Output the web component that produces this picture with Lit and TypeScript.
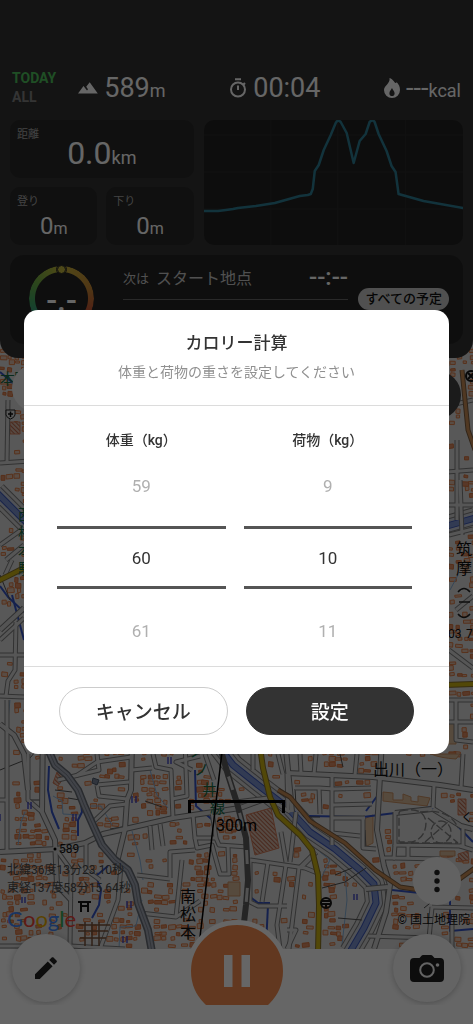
import { LitElement, html, css, svg } from "lit";
import { customElement, state, property } from "lit/decorators.js";

type Pt = [number, number];

const parse = (s: string): Pt[] =>
  s.split(" ").map((p) => p.split(",").map(Number) as Pt);

/* Street network of the map */
const MINOR = [
  "7,700 7,850", "0,800 8,800", "97,754 99,770 58,780", "97,785 129,782", "76,776 97,762 131,757",
  "97,785 99,796 127,799", "92,823 110,806 127,804", "153,754 156,767 171,770 173,818", "185,740 187,796 172,799",
  "132,770 152,768", "193,815 195,838 216,838 219,845 248,847", "195,838 197,848 212,845 220,874 229,874 228,846",
  "212,812 216,838", "170,878 170,852 195,850",
  "137,875 170,879", "140,913 176,917 200,901", "176,917 182,860", "0,946 70,946 125,949", "70,946 71,870 56,849",
  "86,843 86,870 100,880", "100,949 118,900 121,866", "150,826 152,850", "160,824 163,846", "28,754 28,800 42,812",
  "319,787 320,814", "295,788 319,788 334,789 371,788", "333,805 372,804", "333,818 365,818", "332,773 332,845",
  "287,774 288,812", "300,754 301,773", "316,754 314,774", "357,754 355,775", "332,833 360,836", "363,818 363,848 376,849",
  "250,860 305,868 320,874", "250,860 250,902 258,906 287,906", "268,862 262,902", "286,865 277,925 280,949", "299,868 289,949",
  "287,930 296,930 287,949", "281,832 286,862", "296,812 290,862", "253,770 253,754", "278,754 283,774", "236,802 268,798 290,812",
  "395,812 395,845 463,846 463,828", "395,845 394,858 440,859", "382,858 395,858", "408,846 408,858",
  "432,907 473,908", "432,907 428,949", "452,925 452,949", "368,936 430,938", "463,754 461,788",
  "434,786 433,808", "460,846 473,850", "192,770 176,762 200,756", "205,754 214,780",
  "8,400 7,462", "0,463 30,461", "0,545 24,528", "6,560 24,545", "16,622 15,670 8,681 6,696", "0,696 24,697", "0,640 24,618",
  "0,655 24,655", "12,560 5,575", "447,406 473,400", "447,472 473,470", "449,535 473,529", "449,505 473,505", "457,440 457,520",
  "447,700 473,700", "456,700 456,740 473,742", "449,650 473,668", "456,610 473,596", "447,722 473,722", "460,480 462,535",
];
const STREETS = [
  "43,720 42,812 55,840 57,885 71,900", "0,852 57,849 85,843 103,834 125,829 173,818 240,808 262,800",
  "132,740 131,790 127,800 125,829 117,862", "285,740 290,790 292,812", "287,773 373,777 440,785 473,790",
  "382,740 377,830 384,866 390,885 386,912 374,949", "433,809 461,826 473,829", "395,813 432,809",
  "0,630 24,608", "0,724 14,735 24,754 28,790", "300,868 316,852", "366,889 388,887",
];
const MAIN = ["44,740 55,765 67,775 78,790 84,805 92,823 102,845 115,860 128,870 135,885 138,903 148,930 152,952"];
const RAIL = ["218,740 228,775 237,803 246,838 248,880 246,905 241,949"];
const RIVER = [
  "206,730 233,765 258,785 288,808 310,832 335,849 360,870 374,884 376,903 364,928 350,952",
  "-4,492 26,522", "447,526 475,518",
];
const YELLOW = ["259,740 263,768 270,797 278,815 300,835 312,850 318,875 319,905 318,952", "-4,582 28,566", "445,685 475,684"];
const ORANGE = ["278,790 290,797 310,821 345,843 375,870 400,887 440,893 475,868", "462,370 468,430 475,450"];
const BLUE = [
  "49,766 48,790 52,812 59,829", "80,793 82,812 78,820 78,836", "195,770 196,806 215,822", "0,586 8,597 24,612",
  "309,816 363,817 395,813 432,807 452,820 473,842", "366,811 378,795 380,754", "268,905 266,946", "248,840 249,896 258,903 270,903",
  "108,866 96,876 101,890 99,905 92,918", "0,372 14,384 22,396", "12,595 24,640", "450,900 450,931 473,929", "392,890 420,893 446,900",
];
const CREEK = [
  "53,796 62,801 63,814 80,815", "90,806 101,806 112,825", "18,845 21,822 25,812", "132,831 140,860 143,880", "150,770 157,795 168,808",
  "119,949 120,927 136,926 142,900", "345,870 347,900 342,945", "320,852 330,860 320,880", "8,720 10,700", "450,590 458,575",
];
const DARK = [
  "0,770 30,758 45,740", "55,790 72,792", "68,798 80,800", "40,800 28,800", "145,801 162,807", "110,829 122,827",
  "295,789 296,805 304,817 320,817", "340,754 343,767", "365,830 366,849", "338,918 362,920", "322,888 345,882 366,868",
  "0,575 10,600", "424,908 434,900", "335,875 352,868",
];

const seg = (p: Pt, a: Pt, b: Pt) => {
  const dx = b[0] - a[0], dy = b[1] - a[1];
  const t = Math.max(0, Math.min(1, ((p[0] - a[0]) * dx + (p[1] - a[1]) * dy) / (dx * dx + dy * dy || 1)));
  return Math.hypot(p[0] - a[0] - t * dx, p[1] - a[1] - t * dy);
};

/* House footprints, kept clear of streets and water */
function houses(): { outline: string; filled: string } {
  let s = 20417;
  const rnd = () => ((s = (s * 1103515245 + 12345) & 0x7fffffff) / 0x7fffffff);
  const clear: [Pt[], number][] = [
    ...[...MINOR, ...STREETS].map((l) => [parse(l), 5] as [Pt[], number]),
    ...[...MAIN, ...YELLOW, ...ORANGE, ...RAIL].map((l) => [parse(l), 7] as [Pt[], number]),
    ...RIVER.map((l) => [parse(l), 13] as [Pt[], number]),
    ...BLUE.map((l) => [parse(l), 4] as [Pt[], number]),
  ];
  let outline = "", filled = "";
  for (let y = 350; y < 948; y += 6)
    for (let x = 2; x < 473; x += 7) {
      const cx = x + rnd() * 3, cy = y + rnd() * 2;
      const w = 3 + rnd() * 4, h = 2 + rnd() * 3;
      const keep = rnd(), kind = rnd(), tilt = (rnd() - 0.5) * 1.4;
      const density = 0.6 + 0.3 * Math.sin(cx / 31) * Math.cos(cy / 27);
      if (keep > density) continue;
      if (cx > 393 && cx < 466 && cy > 806 && cy < 848) continue;
      if (cx > 382 && cx < 431 && cy > 786 && cy < 808) continue;
      if (cx > 242 && cx < 284 && cy > 804 && cy < 858) continue;
      if (cx > 374 && cx < 473 && cy > 754 && cy < 784) continue;
      if (cx > 335 && cx < 366 && cy > 885 && cy < 925) continue;
      if (clear.some(([l, d]) => l.some((p, i) => i > 0 && seg([cx, cy], l[i - 1], p) < d))) continue;
      const d = `M${(cx - w / 2).toFixed(1)} ${(cy - h / 2).toFixed(1)}l${w.toFixed(1)} ${(-tilt).toFixed(1)}l${(tilt / 2).toFixed(1)} ${h.toFixed(1)}l${(-w).toFixed(1)} ${tilt.toFixed(1)}z`;
      if (kind > 0.7) filled += d;
      else outline += d;
    }
  return { outline, filled };
}
const HOUSES = houses();

const lines = (list: string[], cls: string) =>
  list.map((points) => svg`<polyline class=${cls} points=${points}></polyline>`);

@customElement("street-map")
class StreetMap extends LitElement {
  static styles = css`
    :host { display: block; overflow: hidden; }
    svg { display: block; width: 100%; height: 100%; }
    polyline { fill: none; stroke-linejoin: round; }
    .minor-edge { stroke: #7c7c7c; stroke-width: 5px; }
    .minor { stroke: #d8d8d8; stroke-width: 3px; }
    .street-edge { stroke: #747474; stroke-width: 6px; }
    .street { stroke: #d2d2d2; stroke-width: 4px; }
    .main-edge { stroke: #666b74; stroke-width: 8px; }
    .main { stroke: #a2a8b4; stroke-width: 5px; }
    .main-mid { stroke: #7b808c; stroke-width: 1px; }
    .bank { stroke: #7c7c7c; stroke-width: 22px; }
    .levee { stroke: #d2d2d2; stroke-width: 20px; }
    .path { stroke: #7c7c7c; stroke-width: 14px; }
    .shore { stroke: #c8ccd8; stroke-width: 12px; }
    .stream-edge { stroke: #3c58b8; stroke-width: 7px; }
    .stream { stroke: #7e93d0; stroke-width: 5px; }
    .yellow-edge { stroke: #86702a; stroke-width: 6px; }
    .yellow { stroke: #cdb314; stroke-width: 4px; }
    .orange-edge { stroke: #7a5c40; stroke-width: 5px; }
    .orange { stroke: #c98d55; stroke-width: 3px; }
    .rail { stroke: #5c5c5c; stroke-width: 6px; }
    .rail-mid { stroke: #cacaca; stroke-width: 3px; stroke-dasharray: 14 24; }
    .blue { stroke: #3554c4; stroke-width: 2px; }
    .creek { stroke: #86aed6; stroke-width: 1px; }
    .dark { stroke: #505050; stroke-width: 1px; }
    .outline { fill: #dfbfab; stroke: #dd7c46; stroke-width: 1px; }
    .filled { fill: #dd8d64; stroke: #d4733e; stroke-width: 1px; }
    .block { fill: #d8b998; stroke: #c78f62; }
    .track { fill: none; stroke: #808080; stroke-width: 1.4px; stroke-dasharray: 8 3; }
    .field { fill: none; stroke: #4247c4; stroke-width: 1.4px; }
    .sym { fill: none; stroke: #141414; stroke-width: 2px; }
    text { font-family: Roboto, "Noto Sans CJK JP", sans-serif; fill: #101010; }
    .place { font-size: 16px; }
    .height { font-size: 12px; }
    .station { font-size: 15px; fill: #186b45; }
  `;
  render() {
    return html`<svg viewBox="0 340 473 609" preserveAspectRatio="xMidYMin slice" role="img" aria-label="地図">
      <defs>
        <pattern id="hatch" width="3" height="3" patternUnits="userSpaceOnUse" patternTransform="rotate(-45)">
          <rect width="3" height="3" fill="#d6b8a8"></rect><path d="M0 0V3" stroke="#b8664a" stroke-width="2"></path>
        </pattern>
      </defs>
      <rect y="340" width="473" height="609" fill="#dcdcdc"></rect>
      <path class="outline" d=${HOUSES.outline}></path>
      <path class="filled" d=${HOUSES.filled}></path>
      <path class="block" d="M430 754H460L456 759Q440 758 431 754zM383 792L393 793V800H403V794L411 797V801L418 802V796L430 798L427 806L383 801zM364 819L373 815V843L365 847zM447 723H456V744H447zM228 882H240V896H228zM440 851H455V856H440z"></path>
      <path fill="url(#hatch)" stroke="#cf7a58" d="M246 815L271 808L279 848L255 855zM458 799H466V815H458zM458 854L468 851L469 860L459 861zM10 422H20V434H10zM57 772L65 776 58 786 53 783z"></path>
      ${lines(CREEK, "creek")}${lines(RIVER, "bank")}${lines(RIVER, "levee")}${lines(RIVER, "path")}${lines(RIVER, "shore")}
      ${lines(RIVER, "stream-edge")}${lines(RIVER, "stream")}
      ${lines(BLUE, "blue")}${lines(DARK, "dark")}
      ${lines(MINOR, "minor-edge")}${lines(STREETS, "street-edge")}
      ${lines(MINOR, "minor")}${lines(STREETS, "street")}
      ${lines(MAIN, "main-edge")}${lines(MAIN, "main")}${lines(MAIN, "main-mid")}
      ${lines(RAIL, "rail")}${lines(RAIL, "rail-mid")}
      ${lines(ORANGE, "orange-edge")}${lines(ORANGE, "orange")}
      ${lines(YELLOW, "yellow-edge")}${lines(YELLOW, "yellow")}
      <path class="track" d="M400 811Q424 806 426 822Q426 838 412 842H399V813zM431 832a10 11 0 1 0 20 0a10 11 0 1 0-20 0M420 812Q450 808 458 828M428 818L458 843M425 842L450 820M400 843H458"></path>
      <path d="M78 931H108M80 938H106M79 925H110M85 922V946M92 922V946M99 922V946" fill="none" stroke="#7a5238" stroke-width="1.5"></path>
      <path class="field" d="M168 757v7M171 757v7M132 796v7M136 796v7M28 802v7M31 802v7M73 814v7M76 814v7M127 901v7M131 901v7M123 936v7M127 936v7M354 894v6M357 894v6M22 897v6M25 897v6M0 814v7"></path>
      <path d="M93 778L99 780L97 785L92 783z" fill="#7b8699" stroke="#4b5668"></path>
      <path class="sym" d="M78 902H91M80 906H89M81 902V912M88 902V912"></path>
      <g class="sym"><circle cx="326" cy="903" r="5"></circle><path d="M322 901H330M322 904H330M326 904V908"></path></g>
      <g class="sym"><circle cx="471" cy="376" r="5"></circle><path d="M468 373L474 379M468 379L474 373"></path></g>
      <path d="M6 410H15V415Q14 418 10.500 419Q7 418 6 415z" fill="#ddd" stroke="#222"></path><path d="M10.500 411.500V417M8 414H13" stroke="#111" stroke-width="1.500"></path>
      <circle cx="55" cy="849" r="1.500"></circle>
      <text class="height" x="59" y="853">589</text>
      <text class="height" x="448" y="638">03</text><text class="height" x="466" y="638">7</text>
      <text class="place" x="373" y="775">出川（一）</text>
      <text class="place" x="180" y="902">南</text><text class="place" x="180" y="920">松</text><text class="place" x="180" y="938">本</text>
      <text class="place" x="456" y="555">筑</text><text class="place" x="456" y="574">摩</text>
      <path d="M458 592Q464 585 470 592M459 602H470M458 614Q464 621 470 614" fill="none" stroke="#222" stroke-width="1.500"></path>
      <text class="height" x="461" y="822">く</text>
      <text class="station" x="0" y="384">本</text><text class="station" x="14" y="384">駅</text>
      <text class="station" x="18" y="520">西</text><text class="station" x="18" y="538">松</text>
      <text class="station" x="18" y="556">本</text><text class="station" x="18" y="574">駅</text>
      <text class="station" x="189" y="757">ノ</text><text class="station" x="194" y="775">ノ</text>
      <text class="station" x="202" y="795">井</text><text class="station" x="210" y="813">線</text>
      <path d="M222 752L200 937" stroke="#000" stroke-width="1.500"></path>
    </svg>`;
  }
}

@customElement("value-picker")
class ValuePicker extends LitElement {
  @property() label = "";
  @property({ type: Number }) value = 0;
  static styles = css`
    :host { display: flex; flex-direction: column; min-width: 0; }
    label { padding-top: 25px; height: 18px; line-height: 18px; font-size: 14px; font-weight: 500; text-align: center; color: #333; }
    button, input { box-sizing: border-box; width: 100%; margin: 0; border: 0; background: none; font: inherit; font-size: 17px; text-align: center; border-radius: 0; }
    button { height: 77px; color: #b0b0b0; cursor: pointer; }
    .prev { padding: 0 0 4px; }
    .next { padding: 6px 0 0; }
    input { height: 63px; padding: 0; border-top: 3px solid #555; border-bottom: 3px solid #555; color: #333; appearance: textfield; outline: none; }
    input::-webkit-inner-spin-button { appearance: none; margin: 0; }
  `;
  render() {
    return html`
      <label for="value">${this.label}</label>
      <button class="prev" type="button" @click=${() => this.value--}>${this.value - 1}</button>
      <input id="value" type="number" .value=${String(this.value)}
        @change=${(e: Event) => (this.value = Number((e.target as HTMLInputElement).value))} />
      <button class="next" type="button" @click=${() => this.value++}>${this.value + 1}</button>
    `;
  }
}

@customElement("app-root")
class AppRoot extends LitElement {
  @state() private open = true;

  static styles = css`
    :host { display: block; font-family: Roboto, "Noto Sans CJK JP", sans-serif; color: #fff; }
    button { font: inherit; cursor: pointer; }
    .screen { position: relative; display: flex; flex-direction: column; min-height: 100vh; background: #fff; }
    .panel { position: relative; z-index: 1; box-sizing: border-box; padding: 69px 10px 14px; background: #333; border-radius: 0 0 18px 18px; }
    .summary { display: flex; justify-content: space-between; align-items: center; height: 38px; padding: 0 2px; margin-bottom: 13px; }
    .group { display: flex; align-items: center; gap: 22px; }
    .tabs { display: flex; flex-direction: column; }
    .tab { padding: 0; border: 0; background: none; text-align: left; font-size: 14px; line-height: 19px; font-weight: 700; color: #828282; }
    .tab.on { color: #4fc35c; }
    .stat { display: flex; align-items: center; gap: 6px; }
    .stat svg { display: block; }
    .num { font-size: 27px; line-height: 32px; }
    .unit { font-size: 18px; }
    .cards { display: grid; grid-template-columns: 184fr 260fr; gap: 10px; margin-bottom: 10px; }
    .left { display: grid; grid-template-columns: 1fr 1fr; gap: 9px; }
    .card { position: relative; box-sizing: border-box; height: 58px; padding: 7px; border-radius: 10px; background: #282828; text-align: center; }
    .card.wide { grid-column: span 2; }
    .name { display: block; height: 16px; text-align: left; font-size: 11px; line-height: 16px; color: #a8a8a8; }
    .big { font-size: 32px; line-height: 38px; margin-top: -9px; display: block; }
    .small { font-size: 24px; line-height: 28px; margin-top: 2px; display: block; }
    .small .unit { font-size: 16px; }
    .chart { display: block; width: 100%; height: 125px; border-radius: 10px; background: #222; }
    .route { box-sizing: border-box; display: flex; gap: 29px; height: 89px; padding: 11px 14px 12px 19px; border-radius: 14px; background: #252525; overflow: hidden; }
    .gauge { position: relative; flex: none; width: 65px; height: 65px; display: grid; place-items: center; }
    .ring { position: absolute; inset: 0; border-radius: 50%;
      background: conic-gradient(#c9b43c, #c98a35 70deg, #c85a35 110deg, #b83a35 150deg, #553 180deg, #2f8a9a 220deg, #3fa868 260deg, #6cae48 300deg, #b0b63c 345deg, #c9b43c);
      mask: radial-gradient(circle, transparent 26px, #000 27px); }
    .knob { position: absolute; top: -1px; left: 28px; box-sizing: border-box; width: 9px; height: 9px; border-radius: 50%; background: #c2b640; border: 1px solid #252525; outline: 1px solid #252525; }
    .pace { position: relative; padding-top: 2px; font-size: 32px; line-height: 32px; font-weight: 500; }
    .next { flex: 1; min-width: 0; display: flex; flex-direction: column; }
    .line { display: flex; align-items: center; height: 22px; padding-right: 101px; }
    .pre { font-size: 13px; margin-right: 7px; color: #c8c8c8; }
    .goal { font-size: 16px; color: #c8c8c8; flex: 1; }
    .eta { font-size: 24px; line-height: 22px; font-weight: 500; }
    .plan-row { display: flex; align-items: center; gap: 10px; }
    .rule { flex: 1; height: 1px; background: #666; }
    .plan { height: 22px; padding: 0 7px; border: 0; border-radius: 11px; background: #c8c8c8; color: #111; font-size: 13px; line-height: 22px; font-weight: 500; }
    .map-wrap { position: relative; flex: 1; min-height: 609px; margin-top: -18px; display: flex; }
    .map { position: absolute; inset: 0; }
    .side { position: absolute; top: 24px; left: 12px; width: 48px; height: 48px; border-radius: 50%; border: 0; background: #f2f2f2; }
    .side.dark { top: 31px; left: auto; right: 12px; background: #444; }
    .more { position: absolute; right: 12px; bottom: 44px; width: 48px; height: 48px; padding: 0; border: 0; border-radius: 50%; background: #f6f6f6; display: grid; place-items: center; }
    .scale { position: absolute; left: 188px; bottom: 114px; width: 97px; text-align: center; color: #000; font-size: 16px; line-height: 19px; }
    .bar { box-sizing: border-box; height: 13px; margin-bottom: 3px; border: 3px solid #000; border-bottom: 0; }
    .coords { position: absolute; left: 7px; bottom: 52px; color: #4a4a4a; font-size: 12px; line-height: 18px; }
    .google { position: absolute; left: 7px; bottom: 16px; font-family: Lato, sans-serif; font-size: 22px; line-height: 28px; }
    .g1 { color: #4285f4; } .g2 { color: #ea4335; } .g3 { color: #e5a800; } .g4 { color: #34a853; }
    .credit { position: absolute; right: 3px; bottom: 20px; color: #111; font-size: 12px; line-height: 18px; }
    .foot { height: 75px; }
    .actions { position: absolute; left: 0; right: 0; bottom: 19px; height: 85px; padding: 0 12px; display: flex; justify-content: space-between; align-items: flex-end; overflow: hidden; }
    .round { width: 68px; height: 68px; margin-bottom: 3px; padding: 0; border: 0; border-radius: 50%; background: #fafafa; box-shadow: 0 1px 6px rgba(0, 0, 0, 0.25); display: grid; place-items: center; }
    .pause { align-self: flex-start; box-sizing: border-box; flex: none; width: 102px; height: 102px; padding: 0; border: 5px solid #fff; border-radius: 50%; background: #f58d50; display: grid; place-items: center; }
    .overlay { position: fixed; inset: 0; z-index: 5; box-sizing: border-box; padding: 40px 24px 0; display: grid; align-items: center; background: rgba(0, 0, 0, 0.6); }
    .dialog { background: #fff; border-radius: 14px; color: #333; overflow: hidden; }
    .head { padding: 20px 16px 23px; text-align: center; border-bottom: 1px solid #dcdcdc; }
    h2 { margin: 0 0 6px; font-size: 17px; line-height: 26px; font-weight: 500; }
    .head p { margin: 0; font-size: 14px; line-height: 20px; color: #909090; }
    .pickers { display: grid; grid-template-columns: 1fr 1fr; gap: 18px; padding: 0 37px 0 33px; border-bottom: 1px solid #dcdcdc; }
    .buttons { display: grid; grid-template-columns: 1fr 1fr; gap: 18px; padding: 20px 35px 19px; }
    .btn { height: 48px; padding: 0 0 2px; border: 1px solid #ccc; border-radius: 24px; background: #fff; color: #333; font-size: 19px; font-weight: 500; }
    .btn.ok { border-color: #333; background: #333; color: #fff; }
  `;

  render() {
    return html`
      <main class="screen">
        <section class="panel">
          <div class="summary">
            <div class="group">
              <div class="tabs"><button class="tab on">TODAY</button><button class="tab">ALL</button></div>
              <div class="stat">
                <svg width="20" height="12" viewBox="0 0 20 12"><path d="M0 11.500L5.500 4L9 8.500L10 7.300L8.200 4.700L11.700.3L19.800 11.500z" fill="#fff"></path></svg>
                <span><span class="num">589</span><span class="unit">m</span></span>
              </div>
            </div>
            <div class="stat">
              <svg width="18" height="20" viewBox="0 0 18 20" fill="none" stroke="#fff" stroke-width="2"><circle cx="9" cy="11.500" r="7"></circle><path d="M6 1.200H12M9 7.500V12M14.500 5L16 6.500"></path></svg>
              <span class="num">00:04</span>
            </div>
            <div class="stat">
              <svg width="16" height="20" viewBox="0 0 16 20"><path fill="#fff" fill-rule="evenodd" d="M5.500 0C9.500 1.500 9.800 4 11.500 5C12.300 5 12.600 4.600 12.600 4C15 6.500 16 9 16 12A8 8 0 0 1 0 12C0 7.500 6.500 5.500 5.500 0zM8 10C7.200 11.800 5.400 13 5.400 15.200A2.600 2.800 0 0 0 10.600 15.200C10.600 13 8.500 12 8 10z"></path></svg>
              <span><span class="num">---</span><span class="unit">kcal</span></span>
            </div>
          </div>
          <div class="cards">
            <div class="left">
              <div class="card wide"><span class="name">距離</span><span class="big">0.0<span class="unit">km</span></span></div>
              <div class="card"><span class="name">登り</span><span class="small">0<span class="unit">m</span></span></div>
              <div class="card"><span class="name">下り</span><span class="small">0<span class="unit">m</span></span></div>
            </div>
            <svg class="chart" viewBox="0 0 260 125" preserveAspectRatio="none" role="img" aria-label="標高グラフ">
              <path d="M0 15H260M0 52H260M0 89H260M67 0V125M134 0V125M202 0V125" stroke="#2a2a2a" stroke-width="1"></path>
              <path d="M0 91H14L22 90L29 89L34 88L52 86L71 83L96 76L104 75L107 74L109 69L111 51L115 45L120 30L127 15L132 3Q134-1 137 2L143 13L150 43L156 21L162 14L166 2Q169-1 171 2L175 14L183 31L188 46L192 52L195 74L220 81L260 88" fill="none" stroke="#2f7f97" stroke-width="2.500" stroke-linejoin="round"></path>
            </svg>
          </div>
          <div class="route">
            <div class="gauge"><div class="ring"></div><div class="knob"></div><span class="pace">-.-</span></div>
            <div class="next">
              <div class="line"><span class="pre">次は</span><span class="goal">スタート地点</span><span class="eta">--:--</span></div>
              <div class="plan-row"><div class="rule"></div><button class="plan">すべての予定</button></div>
            </div>
          </div>
        </section>

        <div class="map-wrap">
          <street-map class="map"></street-map>
          <button class="side" aria-label="戻る"></button>
          <button class="side dark" aria-label="進む"></button>
          <div class="scale"><div class="bar"></div>300m</div>
          <div class="coords">北緯36度13分23.10秒<br />東経137度58分15.64秒</div>
          <div class="google"><span class="g1">G</span><span class="g2">o</span><span class="g3">o</span><span class="g1">g</span><span class="g4">l</span><span class="g2">e</span></div>
          <div class="credit">© 国土地理院</div>
          <button class="more" aria-label="メニュー">
            <svg width="6" height="24" viewBox="0 0 6 24" fill="#222"><circle cx="3" cy="3.500" r="2.700"></circle><circle cx="3" cy="12" r="2.700"></circle><circle cx="3" cy="20.500" r="2.700"></circle></svg>
          </button>
        </div>
        <div class="foot"></div>
        <div class="actions">
          <button class="round" aria-label="編集">
            <svg width="24" height="24" viewBox="0 0 24 24" fill="#222"><path d="M1 18.200V23H5.800L18.600 10.200L13.800 5.400zM22.500 6.300C23 5.800 23 5 22.500 4.500L19.500 1.500C19 1 18.200 1 17.700 1.500L15.200 4L20 8.800z"></path></svg>
          </button>
          <button class="pause" aria-label="一時停止">
            <svg width="28" height="32" viewBox="0 0 28 32" fill="#fff"><path d="M1 0H9.500V32H1zM18.500 0H27V32H18.500z"></path></svg>
          </button>
          <button class="round" aria-label="カメラ">
            <svg width="34" height="27" viewBox="0 0 34 27"><path d="M4 3H9.500L11.500.8Q12 0 13 0H21Q22 0 22.500.8L24.500 3H30Q34 3 34 7V23Q34 27 30 27H4Q0 27 0 23V7Q0 3 4 3z" fill="#222"></path><circle cx="17" cy="15" r="6.800" fill="none" stroke="#fafafa" stroke-width="2"></circle><circle cx="27.500" cy="10" r="1.800" fill="#fafafa"></circle></svg>
          </button>
        </div>
      </main>

      ${this.open
        ? html`<div class="overlay">
            <form class="dialog" role="dialog" aria-labelledby="title" @submit=${this.close}>
              <div class="head">
                <h2 id="title">カロリー計算</h2>
                <p>体重と荷物の重さを設定してください</p>
              </div>
              <div class="pickers">
                <value-picker label="体重（kg）" .value=${60}></value-picker>
                <value-picker label="荷物（kg）" .value=${10}></value-picker>
              </div>
              <div class="buttons">
                <button class="btn" type="button" @click=${this.close}>キャンセル</button>
                <button class="btn ok" type="submit">設定</button>
              </div>
            </form>
          </div>`
        : null}
    `;
  }

  private close(e: Event) {
    e.preventDefault();
    this.open = false;
  }
}
